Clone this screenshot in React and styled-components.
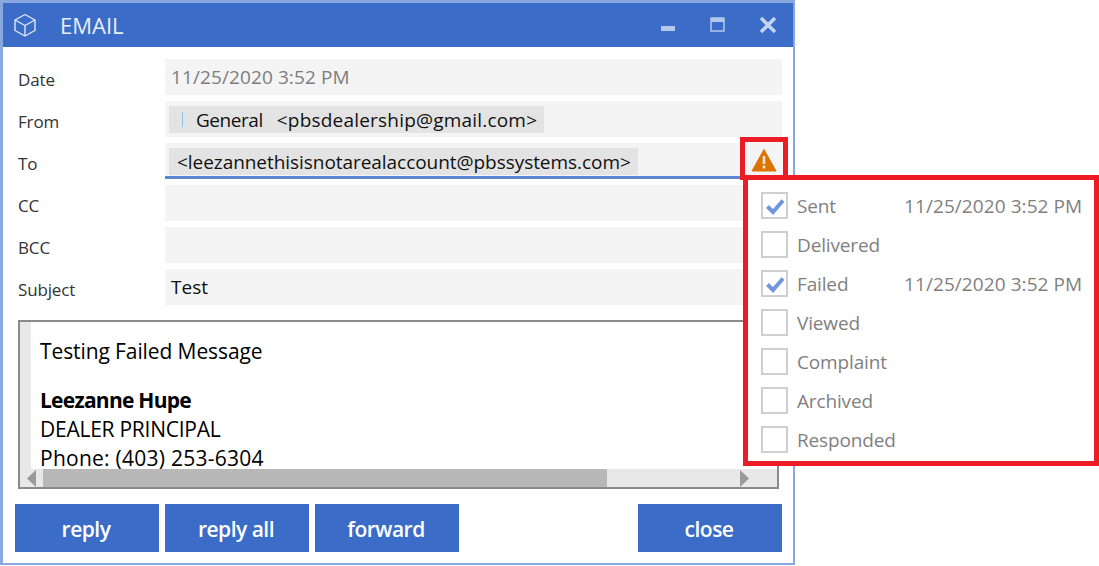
import styled, { createGlobalStyle } from 'styled-components'

const GlobalStyle = createGlobalStyle`
  html, body { margin: 0; padding: 0; background: #fff; }
  body { font-family: "Open Sans", "Noto Sans", sans-serif; overflow: hidden; }
`

const Page = styled.div`
  position: relative;
  width: 1099px;
  height: 566px;
  overflow: hidden;
`

const Window = styled.div`
  width: 795px;
  height: 565px;
  box-sizing: border-box;
  border: solid #8aa8e0;
  border-width: 3px 2px 2px 3px;
  display: flex;
  flex-direction: column;
  background: #fff;
`

const TitleBar = styled.div`
  height: 44px;
  flex: none;
  background: #3b6cc7;
  display: flex;
  align-items: center;
  color: #fff;
`

const AppIcon = styled.svg`
  width: 26px;
  height: 26px;
  margin-left: 9px;
  fill: none;
  stroke: #dfe7f7;
  stroke-width: 1.4;
  stroke-linejoin: round;
`

const Title = styled.div`
  font-size: 22px;
  margin-left: 22px;
  flex: 1;
  color: #e8eefa;
`

const WinButton = styled.svg`
  width: 18px;
  height: 18px;
  margin-left: ${p => p.$gap}px;
  margin-right: ${p => p.$right || 0}px;
  flex: none;
`

const Form = styled.div`
  display: flex;
  flex-direction: column;
  gap: 6px;
  padding: 12px 11px 0 15px;
`

const Row = styled.div`
  display: flex;
  align-items: center;
  height: 36px;
`

const Label = styled.div`
  width: 147px;
  flex: none;
  font-size: 17px;
  letter-spacing: -0.15px;
  color: #333;
  padding-top: 5px;
`

const Field = styled.div`
  flex: 1;
  height: 36px;
  box-sizing: border-box;
  background: #f4f4f4;
  display: flex;
  align-items: center;
  padding-left: ${p => p.$pad ?? 4}px;
  font-size: 19px;
  letter-spacing: ${p => p.$muted ? '0.1px' : '0'};
  color: ${p => p.$muted ? '#7d7d7d' : '#111'};
  border-bottom: ${p => p.$active ? '3px solid #5b87d2' : 'none'};
`

const Chip = styled.div`
  height: 27px;
  background: #e3e3e3;
  display: flex;
  align-items: center;
  padding: 0 7px 0 8px;
  font-size: 19px;
  letter-spacing: -0.05px;
  color: #111;
  white-space: pre;
  margin-top: ${p => p.$lift || 0}px;
`

const Tick = styled.span`
  width: 1px;
  height: 15px;
  background: #8cc4ee;
  margin: 0 13px 0 5px;
`

const SenderName = styled.span`
  letter-spacing: -0.45px;
  margin-right: 14px;
`

const SenderAddress = styled.span`
  letter-spacing: 0.2px;
`

const Body = styled.div`
  margin: 15px 14px 0 15px;
  height: 169px;
  box-sizing: border-box;
  border: 2px solid #8a8a8a;
  display: flex;
  flex-direction: column;
  overflow: hidden;
`

const BodyMain = styled.div`
  flex: 1;
  min-height: 0;
  display: flex;
  overflow: hidden;
`

const Gutter = styled.div`
  width: 11px;
  flex: none;
  background: #e8e8e8;
`

const Mail = styled.div`
  padding: 15px 0 0 9px;
  font-size: 21px;
  line-height: 29px;
  letter-spacing: -0.1px;
  color: #000;
`

const MailLine = styled.div`
  font-weight: ${p => p.$bold ? 700 : 400};
  letter-spacing: ${p => p.$spacing ?? 'inherit'};
  margin-bottom: ${p => p.$after || 0}px;
`

const Scrollbar = styled.div`
  height: 18px;
  flex: none;
  background: #e8e8e8;
  display: flex;
  align-items: center;
`

const Arrow = styled.svg`
  width: 9px;
  height: 17px;
  flex: none;
  fill: #9a9a9a;
  margin: 0 ${p => p.$right}px 0 ${p => p.$left}px;
`

const Thumb = styled.div`
  width: 564px;
  height: 18px;
  background: #b8b8b8;
`

const Spacer = styled.div`
  flex: 1;
`

const Buttons = styled.div`
  display: flex;
  gap: 6px;
  padding: 15px 11px 0 12px;
`

const Button = styled.button`
  width: 144px;
  height: 48px;
  border: none;
  background: #3b6cc7;
  color: #fff;
  font-family: inherit;
  font-size: 21px;
  font-weight: 600;
  letter-spacing: -0.5px;
  padding: 2px 2px 0 0;
  margin-left: ${p => p.$push ? 'auto' : '0'};
`

const RedBox = styled.div`
  position: absolute;
  box-sizing: border-box;
  border: 5px solid #ed1c24;
`

const WarnBox = styled(RedBox)`
  left: 740px;
  top: 137px;
  width: 48px;
  height: 43px;
  padding-top: 3px;
  background: #f4f4f4;
  display: flex;
  align-items: center;
  justify-content: center;
`

const Popup = styled(RedBox)`
  left: 743px;
  top: 175px;
  width: 356px;
  height: 291px;
  background: #fff;
  padding: 12px 0 0 13px;
  display: flex;
  flex-direction: column;
  gap: 12px;
`

const StatusRow = styled.div`
  display: flex;
  align-items: center;
  height: 27px;
  font-size: 19px;
  letter-spacing: 0.08px;
  color: #7f7f7f;
`

const Check = styled.div`
  width: 27px;
  height: 27px;
  box-sizing: border-box;
  border: 2px solid #cfcfcf;
  flex: none;
  display: flex;
  align-items: center;
  justify-content: center;
`

const StatusName = styled.div`
  width: 107px;
  margin-left: 9px;
  flex: none;
  letter-spacing: -0.15px;
`

const statuses = [
  { name: 'Sent', time: '11/25/2020 3:52 PM' },
  { name: 'Delivered' },
  { name: 'Failed', time: '11/25/2020 3:52 PM' },
  { name: 'Viewed' },
  { name: 'Complaint' },
  { name: 'Archived' },
  { name: 'Responded' },
]

function App() {
  return (
    <Page>
      <GlobalStyle />
      <Window>
        <TitleBar>
          <AppIcon viewBox="0 0 26 26">
            <path d="M13 2.5 23 8v10.5L13 24 3 18.5V8z" />
            <path d="M3 8l10 5.5L23 8M13 13.5V24" />
          </AppIcon>
          <Title>EMAIL</Title>
          <WinButton $gap={0} viewBox="0 0 18 18">
            <rect x="2" y="10" width="14" height="5" fill="#b4c8ec" />
          </WinButton>
          <WinButton $gap={31} viewBox="0 0 18 18">
            <rect x="3" y="2" width="13" height="13" fill="none" stroke="#b4c8ec" strokeWidth="1.5" />
            <rect x="3" y="2" width="13" height="4" fill="#b4c8ec" />
          </WinButton>
          <WinButton $gap={33} $right={16} viewBox="0 0 18 18">
            <path d="M2 2l14 14M16 2 2 16" stroke="#c4d4f1" strokeWidth="3.6" fill="none" />
          </WinButton>
        </TitleBar>

        <Form>
          <Row>
            <Label>Date</Label>
            <Field $muted $pad={6}>11/25/2020 3:52 PM</Field>
          </Row>
          <Row>
            <Label>From</Label>
            <Field>
              <Chip $lift={1}>
                <Tick />
                <SenderName>General</SenderName>
                <SenderAddress>&lt;pbsdealership@gmail.com&gt;</SenderAddress>
              </Chip>
            </Field>
          </Row>
          <Row>
            <Label>To</Label>
            <Field $active>
              <Chip $lift={4}>&lt;leezannethisisnotarealaccount@pbssystems.com&gt;</Chip>
            </Field>
          </Row>
          <Row>
            <Label>CC</Label>
            <Field />
          </Row>
          <Row>
            <Label>BCC</Label>
            <Field />
          </Row>
          <Row>
            <Label>Subject</Label>
            <Field $pad={6}>Test</Field>
          </Row>
        </Form>

        <Body>
          <BodyMain>
            <Gutter />
            <Mail>
              <MailLine $after={20}>Testing Failed Message</MailLine>
              <MailLine $bold $spacing="-0.75px">Leezanne Hupe</MailLine>
              <MailLine $spacing="-0.25px">DEALER PRINCIPAL</MailLine>
              <MailLine $spacing="0.25px">Phone: (403) 253-6304</MailLine>
            </Mail>
          </BodyMain>
          <Scrollbar>
            <Arrow $left={7} $right={7} viewBox="0 0 9 17"><path d="M9 0v17L0 8.5z" /></Arrow>
            <Thumb />
            <Spacer />
            <Arrow $left={0} $right={28} viewBox="0 0 9 17"><path d="M0 0v17l9-8.5z" /></Arrow>
          </Scrollbar>
        </Body>

        <Buttons>
          <Button>reply</Button>
          <Button>reply all</Button>
          <Button>forward</Button>
          <Button $push>close</Button>
        </Buttons>
      </Window>

      <WarnBox>
        <svg width="26" height="24" viewBox="0 0 26 24">
          <path d="M13 1.5 25 23H1z" fill="#dd7300" stroke="#dd7300" strokeLinejoin="round" />
          <rect x="11.7" y="8" width="2.6" height="8" fill="#f6e6d4" />
          <rect x="11.7" y="17.5" width="2.6" height="3" fill="#f6e6d4" />
        </svg>
      </WarnBox>

      <Popup>
        {statuses.map(s => (
          <StatusRow key={s.name}>
            <Check>
              {s.time && (
                <svg width="20" height="20" viewBox="0 0 20 20">
                  <path d="M2.5 10.5 8 16 18 4.5" fill="none" stroke="#7097de" strokeWidth="4" />
                </svg>
              )}
            </Check>
            <StatusName>{s.name}</StatusName>
            {s.time}
          </StatusRow>
        ))}
      </Popup>
    </Page>
  )
}

export default App
